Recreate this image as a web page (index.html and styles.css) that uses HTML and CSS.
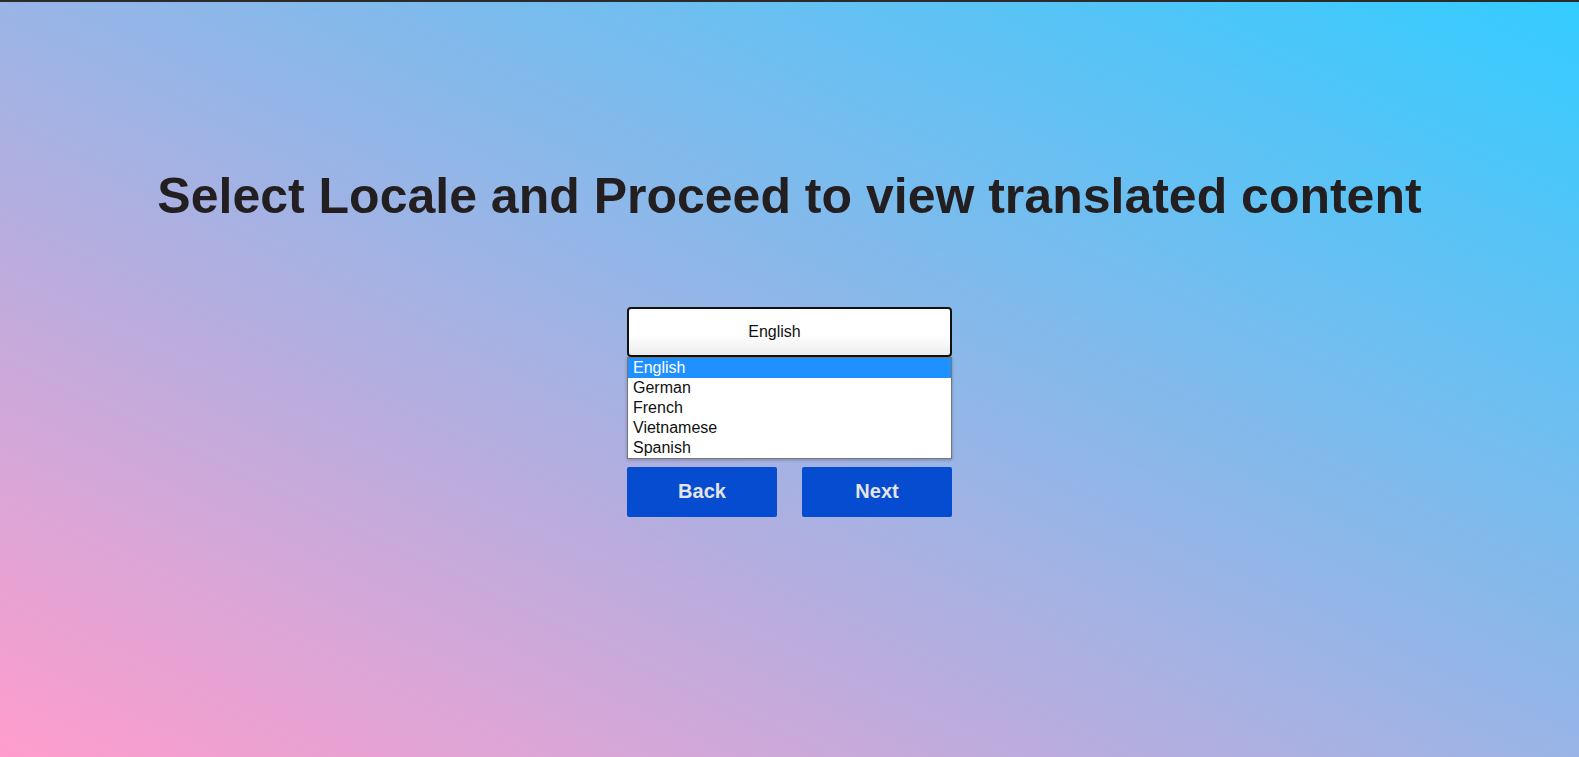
FILE: index.html
```html
<!DOCTYPE html>
<html lang="en">
<head>
<meta charset="utf-8">
<title>Select Locale</title>
<link rel="stylesheet" href="styles.css">
</head>
<body>
<div class="topbar"></div>
<main class="page">
  <h1 class="title">Select Locale and Proceed to view translated content</h1>
  <div class="picker">
    <div class="select">English</div>
    <ul class="listbox">
      <li class="option selected">English</li>
      <li class="option">German</li>
      <li class="option">French</li>
      <li class="option">Vietnamese</li>
      <li class="option">Spanish</li>
    </ul>
    <div class="actions">
      <button class="btn">Back</button>
      <button class="btn">Next</button>
    </div>
  </div>
</main>
</body>
</html>
```
FILE: styles.css
```css
html, body {
  margin: 0;
  padding: 0;
}
body {
  min-height: 100vh;
  background: linear-gradient(to top right, #ff9dcd, #33ccff);
  font-family: "Liberation Sans", Arial, sans-serif;
  overflow: hidden;
}
.topbar {
  height: 2px;
  background: #2b2b2b;
}
.page {
  display: flex;
  flex-direction: column;
  align-items: center;
  padding-top: 166px;
}
.title {
  margin: 0;
  font-size: 50px;
  font-weight: 700;
  color: #231f20;
  line-height: 56px;
  white-space: nowrap;
}
.picker {
  margin-top: 83px;
  width: 325px;
  display: flex;
  flex-direction: column;
}
.select {
  box-sizing: border-box;
  height: 50px;
  border: 2px solid #111;
  border-radius: 4px;
  background: linear-gradient(to bottom, #ffffff 0%, #ffffff 55%, #ececec 100%);
  display: flex;
  align-items: center;
  justify-content: center;
  padding-right: 30px;
  font-size: 16px;
  color: #111;
}
.listbox {
  list-style: none;
  margin: 0;
  padding: 0;
  background: #fff;
  border: 1px solid #767676;
  box-shadow: 0 1px 3px rgba(0,0,0,0.25);
}
.option {
  height: 20px;
  line-height: 19px;
  padding-left: 5px;
  font-size: 16px;
  color: #111;
}
.option.selected {
  background: #1e90ff;
  color: #fff;
}
.actions {
  margin-top: 8px;
  display: flex;
  justify-content: space-between;
}
.btn {
  width: 150px;
  height: 50px;
  border: none;
  border-radius: 2px;
  background: #054cd1;
  color: #e4e4e4;
  font-family: "Liberation Sans", Arial, sans-serif;
  font-size: 20px;
  font-weight: 700;
  padding: 0 0 2px;
}
```
